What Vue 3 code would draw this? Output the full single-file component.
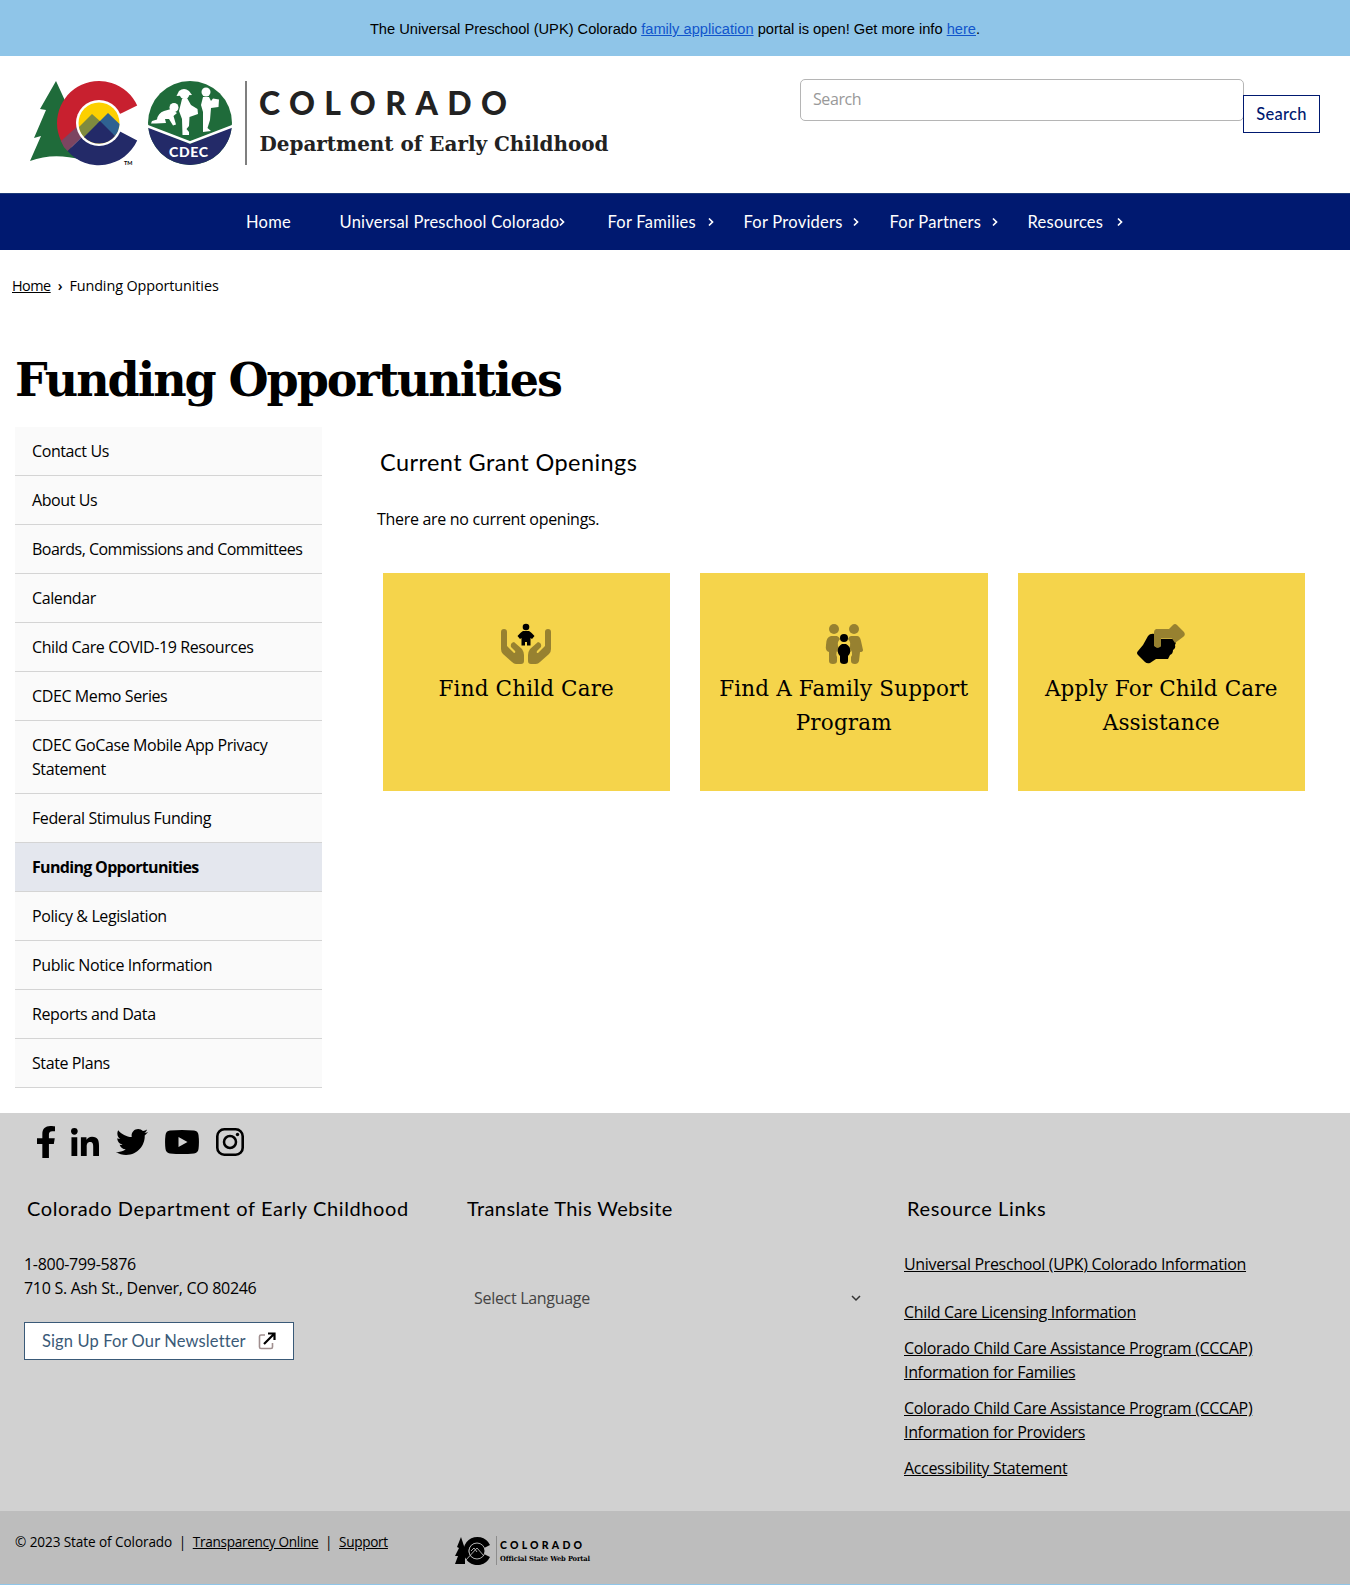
<script setup>
const nav = [
  { label: 'Home', cls: 'home' },
  { label: 'Universal Preschool Colorado', cls: 'upk', more: true },
  { label: 'For Families', cls: 'families', more: true },
  { label: 'For Providers', cls: 'providers', more: true },
  { label: 'For Partners', cls: 'partners', more: true },
  { label: 'Resources', cls: 'resources', more: true },
]
const side = [
  'Contact Us', 'About Us', 'Boards, Commissions and Committees', 'Calendar',
  'Child Care COVID-19 Resources', 'CDEC Memo Series', 'CDEC GoCase Mobile App Privacy Statement',
  'Federal Stimulus Funding', 'Funding Opportunities', 'Policy & Legislation',
  'Public Notice Information', 'Reports and Data', 'State Plans',
]
const links = [
  'Universal Preschool (UPK) Colorado Information',
  'Child Care Licensing Information',
  'Colorado Child Care Assistance Program (CCCAP) Information for Families',
  'Colorado Child Care Assistance Program (CCCAP) Information for Providers',
  'Accessibility Statement',
]
</script>

<template>
  <div class="page">
    <div class="banner">
      <p>The Universal Preschool (UPK) Colorado <a href="#">family application</a> portal is open! Get more info <a href="#">here</a>.</p>
    </div>

    <header class="header">
      <svg class="logo" width="590" height="90" viewBox="28 78 590 90">
        <path fill="#1f6b3a" d="M56 81 L67 105 L63 104 L72 150 L82 160 Q54 152 30 161 L41 136 L34 138 L46 110 L40 109 Z" />
        <path fill="#c8202f" d="M137.200 105.550A42 42 0 1 0 65.240 148L99 123 L122 113 Z" />
        <path fill="#232a68" d="M137.200 140.450A42 42 0 0 1 67.500 151L99 120 L121 132 Z" />
        <path fill="#7c4561" d="M61 141 L80 124 L84 135 L67.500 151 Q63 147 61 141Z" />
        <circle cx="99" cy="123" r="23" fill="#fff" />
        <circle cx="99" cy="123" r="20.500" fill="#fdd000" />
        <path fill="#7f8b3f" d="M79 127 L92 114 L101 122 L85 138 Q80 133 79 127Z" />
        <path fill="#2f6291" d="M97 124 L108 113 L119.500 124 Q119 131 115 136Z" />
        <path fill="#232a68" d="M84 137 L100 121 L115 136 A20.500 20.500 0 0 1 84 137Z" />
        <text x="124" y="165" font-size="5.500" font-weight="bold" class="sans">TM</text>
        <circle cx="190" cy="123" r="42" fill="#1f6b3a" />
        <path fill="#232a68" d="M148.200 127 L190 144 L231.800 127 A42 42 0 0 1 148.200 127Z" />
        <path stroke="#fff" stroke-width="2.500" fill="none" d="M147 126 L190 142.500 L233 126" />
        <g fill="#fff">
          <circle cx="174" cy="107.500" r="4.500" />
          <path d="M171 109 L177 113 L173.500 116 L176 124.500 L173 125.500 L169 119 L165 119 L166 123 L156 123.500 L151 123.500 L152 121 L157 119.500 Q158 113 164 111Z" />
          <circle cx="184.500" cy="94.500" r="4.700" />
          <path d="M176.500 96 L179 91 Q184 87 189 91 L192 95Z" />
          <path d="M182 99 L187 98 L191 105 L197.500 109 L198 114 L189.500 117 L189 126 L186.500 129 L189 132 L189 135 L182.500 135 L182 119 L179 111Z" />
          <circle cx="206" cy="92" r="4.500" />
          <path d="M203 97 L209 97 L211 101 L213 98.500 L219 99.500 L218.500 107 L211 108 L210 120 L207.500 128 L211 131 L203 132 L203 112 L201 105Z" />
        </g>
        <text x="169" y="157" textLength="39" class="cdec">CDEC</text>
        <path stroke="#555" stroke-width="1.500" d="M246 81V165" />
        <text x="259" y="115" textLength="248" class="brand">COLORADO</text>
        <text x="259.500" y="151" textLength="349" lengthAdjust="spacingAndGlyphs" class="dept">Department of Early Childhood</text>
      </svg>
      <form class="search" @submit.prevent>
        <input type="text" placeholder="Search" />
        <button>Search</button>
      </form>
    </header>

    <nav class="nav">
      <a v-for="n in nav" :key="n.label" href="#" :class="n.cls">{{ n.label }}<svg v-if="n.more" width="6" height="10" viewBox="0 0 6 10"><path d="M1 1.500 L4.500 5 L1 8.500" /></svg></a>
    </nav>

    <div class="crumbs"><a href="#">Home</a><span class="sep">›</span><span>Funding Opportunities</span></div>

    <main>
      <h1>Funding Opportunities</h1>
      <div class="cols">
        <ul class="side">
          <li v-for="s in side" :key="s" :class="{ active: s === 'Funding Opportunities' }"><a href="#">{{ s }}</a></li>
        </ul>
        <section class="content">
          <h2>Current Grant Openings</h2>
          <p>There are no current openings.</p>
          <div class="cards">
            <a href="#" class="card">
              <svg width="52" height="42" viewBox="0 0 52 42">
                <path fill="#978130" d="M1 9 Q1 6 4 6 Q7 6 7 9 V23 L14 30 Q16 30 15 28 L11 24 Q10 20 14 19 L22 26 Q24 29 24 32 V38 Q24 41 21 41 H16 Q14 41 12 39 L3 31 Q1 29 1 26Z" />
                <path fill="#978130" d="M51 9 Q51 6 48 6 Q45 6 45 9 V23 L38 30 Q36 30 37 28 L41 24 Q42 20 38 19 L30 26 Q28 29 28 32 V38 Q28 41 31 41 H36 Q38 41 40 39 L49 31 Q51 29 51 26Z" />
                <circle cx="26" cy="4" r="3.300" />
                <path d="M23 8 H29 Q31 9 34.500 13 L32 16 L30.500 15 V22.500 H27 V19 H25 V22.500 H21.500 V15 L20 16 L17.500 13 Q21 9 23 8Z" />
              </svg>
              <span>Find Child Care</span>
            </a>
            <a href="#" class="card">
              <svg width="40" height="42" viewBox="0 0 40 42">
                <g fill="#978130">
                  <circle cx="10" cy="6" r="5" /><circle cx="30" cy="6" r="5" />
                  <path d="M7 13 H13 Q15 14 16 16 Q12 20 15 25 Q11 29 13 34 V38 Q13 41 9 41 Q5 41 5 38 V29 Q1 28 2 22 Q2 14 7 13Z" />
                  <path d="M27 13 H33 Q36 13 37 18 L39 27 Q39 29 36 29 L35 38 Q34 41 31 41 Q27 41 27 38 V34 Q30 29 25 25 Q28 20 24 16 Q25 13 27 13Z" />
                </g>
                <circle cx="20" cy="15" r="4" />
                <path d="M18 21 H22 Q26 23 26.500 28 Q26 31 24 33 V38 Q24 41 20 41 Q16 41 16 38 V33 Q14 31 13.500 28 Q14 23 18 21Z" />
              </svg>
              <span>Find A Family Support Program</span>
            </a>
            <a href="#" class="card">
              <svg class="hands" width="50" height="42" viewBox="0 0 50 42">
                <path d="M12 13 Q14 10 19 11 V23 Q21 26 25 23 V16 H38 Q41 19 39 22 Q40 25 37 27 Q37 31 34 32 L32 36 H20 L14 40 Q11 41 9 39 L2 32 Q0 30 2 28 L7 22Z" />
                <path fill="#978130" d="M20 6 H33 L37 2 Q39 0 41 2 L48 9 Q50 12 47 14 L39 20 L36 15.500 H25 V23 Q22 26 18 23 V9 Q18 7 20 6Z" />
              </svg>
              <span>Apply For Child Care Assistance</span>
            </a>
          </div>
        </section>
      </div>
    </main>

    <footer class="footer">
      <div class="social">
        <svg width="18" height="32" viewBox="22.900 0 274.200 512" preserveAspectRatio="none"><path d="M279.140 288l14.220-92.660h-88.910v-60.130c0-25.350 12.420-50.060 52.240-50.060h40.420V6.260S260.430 0 225.360 0c-73.220 0-121.080 44.380-121.080 124.720v70.620H22.890V288h81.390v224h100.170V288z" /></svg>
        <svg width="28" height="28" viewBox="0 0 448 448"><path d="M100.280 448H7.400V148.900h92.880zM53.790 108.100C24.090 108.100 0 83.500 0 53.800a53.790 53.790 0 0 1 107.580 0c0 29.700-24.100 54.300-53.790 54.300zM447.900 448h-92.680V302.400c0-34.700-.7-79.200-48.290-79.200-48.290 0-55.690 37.700-55.690 76.700V448h-92.780V148.900h89.080v40.800h1.300c12.400-23.500 42.690-48.300 87.880-48.300 94 0 111.280 61.900 111.280 142.300V448z" /></svg>
        <svg width="32" height="32" viewBox="0 0 512 512"><path d="M459.370 151.716c.325 4.548.325 9.097.325 13.645 0 138.720-105.583 298.558-298.558 298.558-59.452 0-114.680-17.219-161.137-47.106 8.447.974 16.568 1.299 25.340 1.299 49.055 0 94.213-16.568 130.274-44.832-46.132-.975-84.792-31.188-98.112-72.772 6.498.974 12.995 1.624 19.818 1.624 9.421 0 18.843-1.300 27.614-3.573-48.081-9.747-84.143-51.980-84.143-102.985v-1.299c13.969 7.797 30.214 12.670 47.431 13.319-28.264-18.843-46.781-51.005-46.781-87.391 0-19.492 5.197-37.360 14.294-52.954 51.655 63.675 129.300 105.258 216.365 109.807-1.624-7.797-2.599-15.918-2.599-24.040 0-57.828 46.782-104.934 104.934-104.934 30.213 0 57.502 12.670 76.670 33.137 23.715-4.548 46.456-13.320 66.599-25.340-7.798 24.366-24.366 44.833-46.132 57.827 21.117-2.273 41.584-8.122 60.426-16.243-14.292 20.791-32.161 39.308-52.628 54.253z" /></svg>
        <svg width="34" height="24" viewBox="0 0 34 24"><path fill-rule="evenodd" d="M5 .6Q17-.6 29 .6Q33 1 33.500 5Q34.400 12 33.500 19Q33 23 29 23.400Q17 24.600 5 23.400Q1 23 .5 19Q-.4 12 .5 5Q1 1 5 .6ZM13.500 7V17L22.500 12Z" /></svg>
        <svg width="28" height="28" viewBox="0 0 28 28"><rect x="1.300" y="1.300" width="25.400" height="25.400" rx="7" fill="none" stroke="#000" stroke-width="2.600" /><circle cx="14" cy="14" r="6" fill="none" stroke="#000" stroke-width="2.500" /><circle cx="21.500" cy="6.500" r="1.700" /></svg>
      </div>
      <div class="fcols">
        <div class="fcol">
          <h3>Colorado Department of Early Childhood</h3>
          <p class="addr">1-800-799-5876<br />710 S. Ash St., Denver, CO 80246</p>
          <a class="signup" href="#">Sign Up For Our Newsletter
            <svg width="18" height="18" viewBox="0 0 18 18"><path d="M7 3H3Q1.500 3 1.500 4.500V15Q1.500 16.500 3 16.500H13Q14.500 16.500 14.500 15V11" fill="none" stroke="#a08f8f" stroke-width="1.600" /><path d="M6 12 L15.500 2.500M10 1.500H16.500V8" fill="none" stroke="#000" stroke-width="2.200" /></svg>
          </a>
        </div>
        <div class="fcol translate">
          <h3>Translate This Website</h3>
          <div class="lang"><span>Select Language</span><svg width="10" height="7" viewBox="0 0 10 7"><path d="M1 1 L5 5 L9 1" fill="none" stroke="#333" stroke-width="1.500" /></svg></div>
        </div>
        <div class="fcol links">
          <h3>Resource Links</h3>
          <p v-for="l in links" :key="l"><a href="#">{{ l }}</a></p>
        </div>
      </div>
    </footer>

    <div class="legal">
      <p>© 2023 State of Colorado<i>|</i><a href="#">Transparency Online</a><i>|</i><a href="#">Support</a></p>
      <svg width="140" height="32" viewBox="452 1534 140 32">
        <path d="M461 1537 L465 1549 V1564 H455 L458 1556 L455 1556 L459 1548 L457 1547Z" />
        <path d="M490 1545 A14 14 0 1 0 490 1557 L484 1554 A8 8 0 1 1 484 1548Z" />
        <circle cx="477" cy="1551" r="8" />
        <circle cx="477" cy="1551" r="8" fill="none" stroke="#bdbdbd" stroke-width=".9" />
        <path d="M465 1561 L477 1548 L484 1556 M471 1551 L474 1548 L477 1552" fill="none" stroke="#bdbdbd" stroke-width=".9" />
        <path stroke="#8d8d8d" d="M496.500 1536V1565" />
        <text x="500" y="1549" textLength="82" class="mini">COLORADO</text>
        <text x="500" y="1561" textLength="90" lengthAdjust="spacingAndGlyphs" class="mini2">Official State Web Portal</text>
      </svg>
    </div>
    <div class="edge"></div>
  </div>
</template>

<style>
body { margin: 0; background: #fff; }
</style>

<style scoped>
* { box-sizing: border-box; }
.page { width: 1350px; height: 1585px; overflow: hidden; display: flex; flex-direction: column; font: 16px/24px "Open Sans", sans-serif; color: #000; }
p, h1, h2, h3, ul { margin: 0; padding: 0; font-weight: 400; }
a { color: inherit; }
.banner { height: 56px; background: #8fc5e8; display: flex; align-items: center; justify-content: center; padding-top: 2px; }
.banner p { font: 14.670px/20px "Liberation Sans", sans-serif; }
.banner a { color: #1155cc; }
.header { height: 137px; display: flex; justify-content: space-between; padding: 22px 30px 0 28px; }
.sans { font-family: Lato, sans-serif; }
.cdec { font: 900 14px Lato, sans-serif; fill: #fff; }
.brand { font: 900 32px Lato, sans-serif; fill: #222; }
.dept { font: 700 21px "DejaVu Serif Condensed", "DejaVu Serif", serif; fill: #222; }
.search { display: flex; align-items: flex-start; }
.search input { width: 444px; height: 42px; margin-top: 1px; border: 1px solid #b5b5b5; border-radius: 5px; padding: 0 12px 2px; font: 16px "Open Sans", sans-serif; letter-spacing: -.4px; outline: 0; }
.search input::placeholder { color: #999; }
.search button { width: 77px; height: 38px; margin: 17px 0 0 -1px; border: 1px solid #001970; background: #fff; color: #001970; font: 500 16.500px Lato, sans-serif; letter-spacing: .3px; padding: 0; }
.nav { height: 57px; flex: none; background: #001970; border-top: 1px solid #1d3a78; color: #fff; display: flex; align-items: center; padding-left: 246px; font: 16.500px/24px Lato, sans-serif; letter-spacing: .25px; }
.nav a { text-decoration: none; display: flex; align-items: center; justify-content: space-between; white-space: nowrap; }
.nav svg { fill: none; stroke: #fff; stroke-width: 1.700; flex: none; }
.home { width: 93.500px; }
.upk { width: 225px; margin-right: 43px; }
.families { width: 106.500px; margin-right: 29.500px; }
.providers { width: 115.500px; margin-right: 30.500px; }
.partners { width: 108px; margin-right: 30px; }
.resources { width: 95.500px; }
.crumbs { height: 72px; padding: 24px 0 0 12px; font-size: 14.400px; letter-spacing: -.1px; }
.crumbs a { letter-spacing: -.5px; }
.sep { margin: 0 7px; font-weight: 600; }
h1 { height: 105px; padding: 28px 0 0 15px; font: 700 46px/60px "DejaVu Serif", serif; letter-spacing: -2.050px; }
main { height: 791px; }
.cols { display: flex; }
.side { width: 307px; margin-left: 15px; list-style: none; letter-spacing: -.4px; }
.side li { background: #fafafa; border-bottom: 1px solid #d4d4d4; padding: 12px 8px 12px 17px; }
.side li:nth-child(3) { letter-spacing: -.52px; }
.side li.active { background: #e4e7ee; font-weight: 700; letter-spacing: -.68px; }
.side a { text-decoration: none; }
.content { margin-left: 55px; width: 940px; }
h2 { font: 23.500px/30px Lato, sans-serif; letter-spacing: .43px; margin: 20px 0 0 3px; }
.content p { margin-top: 30px; letter-spacing: -.3px; }
.cards { display: flex; gap: 30px; margin: 42px 0 0 5.500px; }
.card { width: 287.500px; height: 218px; background: #f5d44b; display: flex; flex-direction: column; align-items: center; text-align: center; padding: 50px 10px 0; text-decoration: none; font: 21.500px/34px "DejaVu Serif", serif; letter-spacing: .15px; }
.card span { margin-top: 7px; }
.hands { margin-right: 1px; }
.footer { height: 398px; flex: none; background: #d1d1d1; }
.social { height: 58px; display: flex; align-items: center; padding-left: 36.500px; gap: 16.800px; }
.fcols { display: flex; padding-left: 24px; }
.fcol { width: 440px; }
h3 { font: 20px/28px Lato, sans-serif; letter-spacing: .62px; margin: 23px 0 0 3px; }
.translate h3 { letter-spacing: .4px; }
.addr { margin-top: 30px; letter-spacing: -.3px; }
.signup { display: flex; align-items: center; justify-content: space-between; width: 270px; height: 38px; margin-top: 22px; padding: 0 17px; border: 1px solid #3a5a78; background: #fff; color: #3a5a78; font: 16.500px Lato, sans-serif; letter-spacing: .13px; text-decoration: none; }
.lang { display: flex; justify-content: space-between; align-items: center; margin: 64px 43px 0 10px; color: #444; letter-spacing: -.3px; }
.links p { width: 360px; margin-bottom: 12px; letter-spacing: -.33px; }
.links h3 + p { margin: 30px 0 24px; }
.legal { height: 73px; flex: none; background: #bdbdbd; display: flex; padding-left: 15px; font-size: 13.600px; letter-spacing: -.1px; }
.legal p { width: 437px; padding-top: 19px; }
.legal a { letter-spacing: -.3px; }
.legal i { font-style: normal; margin: 0 6.600px; }
.legal svg { margin-top: 23px; }
.mini { font: 900 10.500px Lato, sans-serif; }
.mini2 { font: 700 7px "DejaVu Serif Condensed", "DejaVu Serif", serif; }
.edge { height: 1px; flex: none; background: #8fc5e8; }
</style>
